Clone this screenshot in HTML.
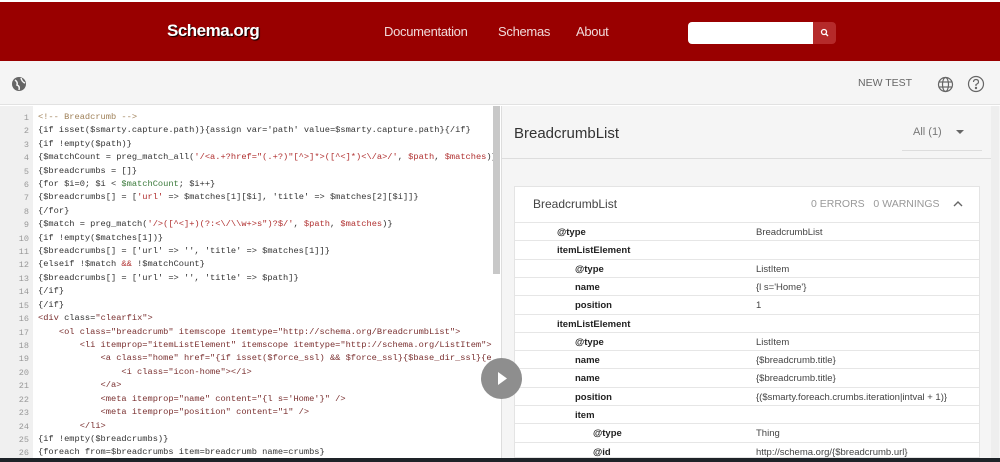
<!DOCTYPE html>
<html><head><style>
*{margin:0;padding:0;box-sizing:border-box}
body{width:1000px;height:462px;overflow:hidden;background:#fff;font-family:"Liberation Sans",sans-serif;position:relative}
.hdr{position:absolute;left:0;top:0;width:1000px;height:61px;background:#990000;border-top:2px solid #fff}
.logo{position:absolute;left:167px;top:19px;color:#fff;font-weight:bold;font-size:17px;letter-spacing:-0.5px;text-shadow:1px 1px 1px #000}
.nav{position:absolute;top:22px;color:#f0d8d8;font-size:13px;letter-spacing:-0.3px}
.search{position:absolute;left:688px;top:20px;width:126px;height:22px;background:#fff;border-radius:4px 0 0 4px}
.sbtn{position:absolute;left:813px;top:20px;width:23px;height:22px;background:#b52a2a;border-radius:0 4px 4px 0}
.tb{position:absolute;left:0;top:61px;width:1000px;height:44px;background:#f5f5f5;border-bottom:1px solid #e2e2e2}
.code{position:absolute;left:0;top:106px;width:500px;height:352px;background:#fff;overflow:hidden}
.gut{position:absolute;left:0;top:0;width:33px;height:352px;background:#f0f0f0}
.ln{position:absolute;left:0;width:29px;text-align:right;font:8.5px "Liberation Mono",monospace;color:#999}
.cl{position:absolute;left:38px;font:8.7px "Liberation Mono",monospace;color:#333;white-space:pre}
.c{color:#a0825a}.s{color:#b03030}.v{color:#3a7a3a}.t{color:#7a3030}
.sb{position:absolute;left:493px;top:106px;width:7px;height:168px;background:#c8c8c8}
.right{position:absolute;left:501px;top:106px;width:499px;height:352px;background:#f5f5f5;border-left:1px solid #ddd}
.card{position:absolute;left:514px;top:186px;width:466px;height:272px;background:#fff;border:1px solid #e4e4e4}
.row{position:absolute;left:0;width:464px;height:18.3px;border-top:1px solid #e6e6e6;font-size:9.5px;color:#222}
.k{position:absolute;top:4px;font-weight:bold}
.val{position:absolute;left:241px;top:4px;color:#444}
.play{position:absolute;left:481px;top:358px;width:41px;height:41px;border-radius:50%;background:#8e8e8e}
.bot{position:absolute;left:0;top:458px;width:1000px;height:4px;background:#1e2328}
</style></head><body>
<div class="hdr">
<div class="logo">Schema.org</div>
<div class="nav" style="left:384px">Documentation</div>
<div class="nav" style="left:498px">Schemas</div>
<div class="nav" style="left:576px">About</div>
<div class="search"></div>
<div class="sbtn"><svg width="23" height="22"><circle cx="11" cy="10" r="2.5" fill="none" stroke="#fff" stroke-width="1.3"/><line x1="13" y1="12" x2="15" y2="14" stroke="#fff" stroke-width="1.3"/></svg></div>
</div>
<div class="tb">
<svg style="position:absolute;left:11px;top:15px" width="16" height="16"><circle cx="8" cy="8" r="7" fill="#666"/><path d="M4 4 Q7 6 6 9 Q9 10 8 14 M10 2 Q11 6 14 7" stroke="#f5f5f5" stroke-width="1.5" fill="none"/></svg>
<div style="position:absolute;left:858px;top:16px;font-size:10.5px;color:#666">NEW TEST</div>
<svg style="position:absolute;left:937px;top:15px" width="17" height="17" fill="none" stroke="#666" stroke-width="1.2"><circle cx="8.5" cy="8.5" r="7"/><ellipse cx="8.5" cy="8.5" rx="3" ry="7"/><line x1="1.5" y1="6" x2="15.5" y2="6"/><line x1="1.5" y1="11" x2="15.5" y2="11"/></svg>
<svg style="position:absolute;left:967px;top:14px" width="18" height="18" fill="none" stroke="#666" stroke-width="1.2"><circle cx="9" cy="9" r="7.5"/><path d="M6.5 7 Q6.5 4.5 9 4.5 Q11.5 4.5 11.5 7 Q11.5 8.5 9 9.5 L9 11"/><circle cx="9" cy="13" r="0.6" fill="#666"/></svg>
</div>
<div class="code"><div class="gut"></div>
<div class="ln" style="top:7px">1</div><div class="cl" style="top:6px"><span class="c">&lt;!-- Breadcrumb --&gt;</span></div>
<div class="ln" style="top:20px">2</div><div class="cl" style="top:19px">{if isset($smarty.capture.path)}{assign var='path' value=$smarty.capture.path}{/if}</div>
<div class="ln" style="top:34px">3</div><div class="cl" style="top:33px">{if !empty($path)}</div>
<div class="ln" style="top:47px">4</div><div class="cl" style="top:46px">{$matchCount = preg_match_all(<span class="s">'/&lt;a.+?href="(.+?)"[^&gt;]*&gt;([^&lt;]*)&lt;\/a&gt;/'</span>, <span class="s">$path</span>, <span class="s">$matches</span>)}</div>
<div class="ln" style="top:61px">5</div><div class="cl" style="top:60px">{$breadcrumbs = []}</div>
<div class="ln" style="top:74px">6</div><div class="cl" style="top:73px">{for $i=0; $i &lt; <span class="v">$matchCount</span>; $i++}</div>
<div class="ln" style="top:87px">7</div><div class="cl" style="top:86px">{$breadcrumbs[] = [<span class="s">'url'</span> =&gt; $matches[1][$i], 'title' =&gt; $matches[2][$i]]}</div>
<div class="ln" style="top:101px">8</div><div class="cl" style="top:100px">{/for}</div>
<div class="ln" style="top:114px">9</div><div class="cl" style="top:113px">{$match = preg_match(<span class="s">'/&gt;([^&lt;]+)(?:&lt;\/\\w+&gt;s")?$/'</span>, <span class="s">$path</span>, <span class="s">$matches</span>)}</div>
<div class="ln" style="top:128px">10</div><div class="cl" style="top:127px">{if !empty($matches[1])}</div>
<div class="ln" style="top:141px">11</div><div class="cl" style="top:140px">{$breadcrumbs[] = ['url' =&gt; '', 'title' =&gt; $matches[1]]}</div>
<div class="ln" style="top:154px">12</div><div class="cl" style="top:153px">{elseif !$match <span class="s">&amp;&amp;</span> !$matchCount}</div>
<div class="ln" style="top:168px">13</div><div class="cl" style="top:167px">{$breadcrumbs[] = ['url' =&gt; '', 'title' =&gt; $path]}</div>
<div class="ln" style="top:181px">14</div><div class="cl" style="top:180px">{/if}</div>
<div class="ln" style="top:195px">15</div><div class="cl" style="top:194px">{/if}</div>
<div class="ln" style="top:208px">16</div><div class="cl" style="top:207px"><span class="t">&lt;div</span> class=<span class="t">"clearfix"</span><span class="t">&gt;</span></div>
<div class="ln" style="top:222px">17</div><div class="cl t" style="top:221px">    &lt;ol class="breadcrumb" itemscope itemtype="http://schema.org/BreadcrumbList"&gt;</div>
<div class="ln" style="top:235px">18</div><div class="cl t" style="top:234px">        &lt;li itemprop="itemListElement" itemscope itemtype="http://schema.org/ListItem"&gt;</div>
<div class="ln" style="top:248px">19</div><div class="cl t" style="top:247px">            &lt;a class="home" href="{if isset($force_ssl) &amp;&amp; $force_ssl}{$base_dir_ssl}{e</div>
<div class="ln" style="top:262px">20</div><div class="cl t" style="top:261px">                &lt;i class="icon-home"&gt;&lt;/i&gt;</div>
<div class="ln" style="top:275px">21</div><div class="cl t" style="top:274px">            &lt;/a&gt;</div>
<div class="ln" style="top:289px">22</div><div class="cl t" style="top:288px">            &lt;meta itemprop="name" content="{l s='Home'}" /&gt;</div>
<div class="ln" style="top:302px">23</div><div class="cl t" style="top:301px">            &lt;meta itemprop="position" content="1" /&gt;</div>
<div class="ln" style="top:316px">24</div><div class="cl t" style="top:315px">        &lt;/li&gt;</div>
<div class="ln" style="top:329px">25</div><div class="cl" style="top:328px">{if !empty($breadcrumbs)}</div>
<div class="ln" style="top:342px">26</div><div class="cl" style="top:341px">{foreach from=$breadcrumbs item=breadcrumb name=crumbs}</div>
</div>
<div class="sb"></div>
<div class="right">
<div style="position:absolute;left:12px;top:19px;font-size:15px;color:#333">BreadcrumbList</div>
<div style="position:absolute;left:411px;top:20px;font-size:11px;color:#777">All (1)</div>
<svg style="position:absolute;left:454px;top:24px" width="8" height="5"><path d="M0 0 L8 0 L4 4z" fill="#666"/></svg>
<div style="position:absolute;left:400px;top:44px;width:80px;height:1px;background:#ddd"></div>
<div style="position:absolute;left:0;top:52px;width:490px;height:1px;background:#ddd"></div>
<div style="position:absolute;left:489px;top:0;width:8px;height:352px;background:#eee"></div>
</div>
<div class="card">
<div style="position:absolute;left:18px;top:10px;font-size:12px;color:#444">BreadcrumbList</div>
<div style="position:absolute;left:296px;top:11px;font-size:10.5px;color:#999">0 ERRORS&nbsp;&nbsp;&nbsp;0 WARNINGS</div>
<svg style="position:absolute;left:438px;top:13px" width="10" height="7"><path d="M1 6 L5 2 L9 6" stroke="#666" stroke-width="1.4" fill="none"/></svg>
<div class="row" style="top:35px"><span class="k" style="left:42px">@type</span><span class="val">BreadcrumbList</span></div>
<div class="row" style="top:53.3px"><span class="k" style="left:42px">itemListElement</span></div>
<div class="row" style="top:71.6px"><span class="k" style="left:60px">@type</span><span class="val">ListItem</span></div>
<div class="row" style="top:89.9px"><span class="k" style="left:60px">name</span><span class="val">{l s='Home'}</span></div>
<div class="row" style="top:108.2px"><span class="k" style="left:60px">position</span><span class="val">1</span></div>
<div class="row" style="top:126.5px"><span class="k" style="left:42px">itemListElement</span></div>
<div class="row" style="top:144.8px"><span class="k" style="left:60px">@type</span><span class="val">ListItem</span></div>
<div class="row" style="top:163.1px"><span class="k" style="left:60px">name</span><span class="val">{$breadcrumb.title}</span></div>
<div class="row" style="top:181.4px"><span class="k" style="left:60px">name</span><span class="val">{$breadcrumb.title}</span></div>
<div class="row" style="top:199.7px"><span class="k" style="left:60px">position</span><span class="val">{($smarty.foreach.crumbs.iteration|intval + 1)}</span></div>
<div class="row" style="top:218px"><span class="k" style="left:60px">item</span></div>
<div class="row" style="top:236.3px"><span class="k" style="left:78px">@type</span><span class="val">Thing</span></div>
<div class="row" style="top:254.6px"><span class="k" style="left:78px">@id</span><span class="val">http://schema.org/{$breadcrumb.url}</span></div>
</div>
<div class="play"><svg width="41" height="41"><path d="M17 14 L26 20.5 L17 27z" fill="#fff"/></svg></div>
<div class="bot"></div>
</body></html>
